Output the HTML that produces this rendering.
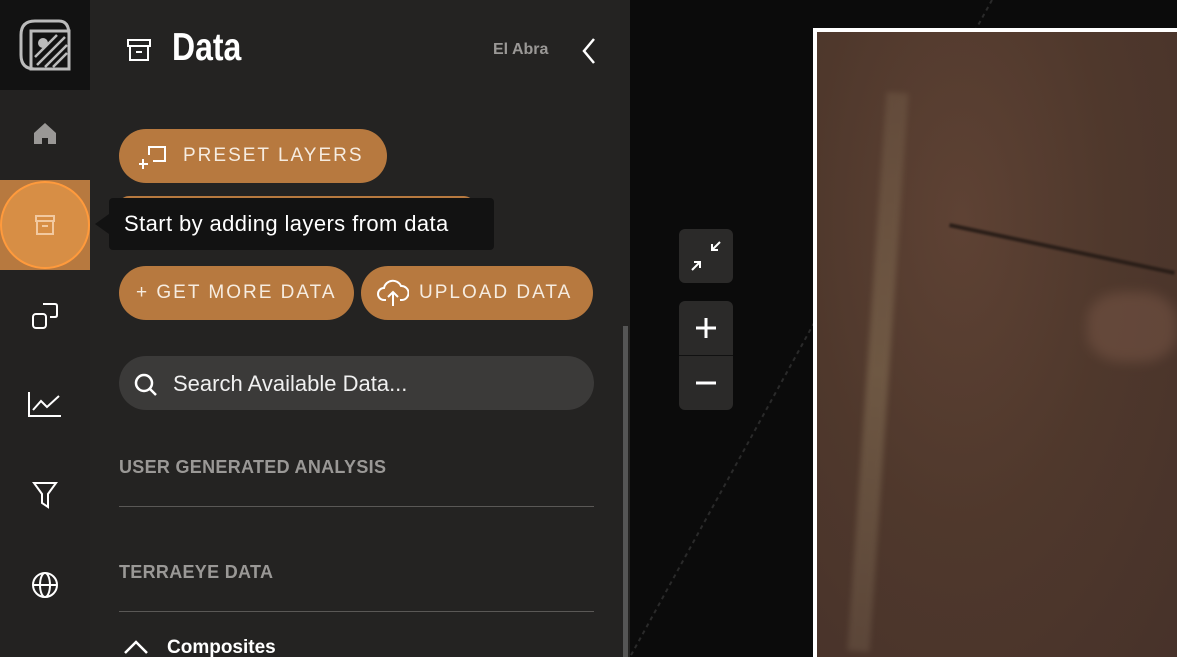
<!DOCTYPE html>
<html><head><style>
*{margin:0;padding:0;box-sizing:border-box}
html,body{width:1177px;height:657px;overflow:hidden}
body{background:#0b0b0b;font-family:"Liberation Sans",sans-serif;position:relative}
.side{position:absolute;left:0;top:0;width:90px;height:657px;background:#232221}
.logo{position:absolute;left:0;top:0;width:90px;height:90px;background:#121212}
.panel{position:absolute;left:90px;top:0;width:540px;height:657px;background:#242322}
.btn{position:absolute;height:54px;border-radius:27px;background:#b7793f;color:#f6ece0;font-size:19px;letter-spacing:2px;display:flex;align-items:center}
.ic{position:absolute;stroke:#fff;fill:none;stroke-width:2}
.hdr{position:absolute;left:119px;color:#9a9896;font-size:18px;font-weight:bold;letter-spacing:.3px}
.line{position:absolute;left:119px;width:475px;height:1px;background:#5a5856}
.ctl{position:absolute;left:679px;width:54px;background:#2b2a29;border-radius:6px}
</style></head><body>
<div class="side"></div>
<div class="logo">
<svg style="position:absolute;left:17px;top:17px" width="56" height="56" viewBox="0 0 56 56" fill="none" stroke="#bbb" stroke-width="3"><path d="M4 18 Q4 4 18 4 H42 Q52 4 52 18 V52 H18 Q4 52 4 38Z"/><rect x="14" y="14" width="38" height="38"/><circle cx="26" cy="26" r="3.5" fill="#bbb"/><path d="M20 48 L48 20 M28 50 L50 28 M36 50 L50 36 M18 40 L40 18" stroke-width="2.5"/></svg>
</div>
<svg style="position:absolute;left:33px;top:122px" width="24" height="22" viewBox="0 0 24 22"><path d="M12 1 L23 11 V22 H15 V16 H9 V22 H1 V11Z" fill="#9a9896"/></svg>
<div style="position:absolute;left:0;top:180px;width:90px;height:90px;background:#b7793f"></div>
<div style="position:absolute;left:0;top:181px;width:90px;height:88px;border-radius:50%;background:#d78e45;border:2px solid #ff9a3c"></div>
<svg class="ic" style="left:33px;top:213px;stroke:#f2c9a0" width="24" height="24" viewBox="0 0 24 24"><rect x="3" y="3" width="18" height="5"/><path d="M4 8 V21 H20 V8 M9 13 H15"/></svg>
<svg class="ic" style="left:31px;top:302px" width="28" height="28" viewBox="0 0 28 28"><rect x="2" y="12" width="13" height="14" rx="3"/><path d="M12 2 H24 Q26 2 26 4 V13 Q26 15 24 15 H19"/></svg>
<svg class="ic" style="left:27px;top:390px" width="36" height="28" viewBox="0 0 36 28"><path d="M2 2 V26 H34 M6 20 L14 11 L20 17 L32 6"/></svg>
<svg class="ic" style="left:32px;top:480px" width="26" height="30" viewBox="0 0 26 30"><path d="M2 3 H24 L16 14 V27 L10 23 V14Z"/></svg>
<svg class="ic" style="left:31px;top:571px" width="28" height="28" viewBox="0 0 28 28"><circle cx="14" cy="14" r="12"/><ellipse cx="14" cy="14" rx="5" ry="12"/><path d="M2 14 H26"/></svg>
<div class="panel"></div>
<svg class="ic" style="left:126px;top:37px" width="26" height="26" viewBox="0 0 26 26"><rect x="2" y="3" width="22" height="6"/><path d="M4 9 V23 H22 V9 M10 15 H16"/></svg>
<div style="position:absolute;left:172px;top:26px;color:#fff;font-size:39px;font-weight:bold;transform:scaleX(.82);transform-origin:left">Data</div>
<div style="position:absolute;left:493px;top:41px;color:#9a9896;font-size:16px;font-weight:bold">El Abra</div>
<svg class="ic" style="left:580px;top:37px" width="18" height="28" viewBox="0 0 18 28"><path d="M14 2 L4 14 L14 26" stroke-width="2.5"/></svg>
<div class="btn" style="left:119px;top:129px;width:268px;padding-left:64px">PRESET LAYERS</div>
<svg class="ic" style="left:139px;top:143px" width="30" height="26" viewBox="0 0 30 26"><path d="M4 16 V26 M-1 21 H9 M10 12 V4 H26 V18 H14"/></svg>
<div style="position:absolute;left:119px;top:196px;width:355px;height:20px;border-radius:10px;background:#b7793f"></div>
<div style="position:absolute;left:109px;top:198px;width:385px;height:52px;background:#121212;border-radius:4px;color:#fff;font-size:22px;letter-spacing:.4px;padding:13px 0 0 15px">Start by adding layers from data</div>
<div style="position:absolute;left:95px;top:214px;width:0;height:0;border-top:10px solid transparent;border-bottom:10px solid transparent;border-right:14px solid #121212"></div>
<div class="btn" style="left:119px;top:266px;width:235px;padding-left:17px">+ GET MORE DATA</div>
<div class="btn" style="left:361px;top:266px;width:232px;padding-left:58px">UPLOAD DATA</div>
<svg class="ic" style="left:377px;top:278px" width="32" height="30" viewBox="0 0 32 30"><path d="M9 22 H7 A6 6 0 0 1 7 10 A9 9 0 0 1 24 8 A6 6 0 0 1 25 22 H23 M16 28 V14 M11 19 L16 14 L21 19"/></svg>
<div style="position:absolute;left:119px;top:356px;width:475px;height:54px;border-radius:27px;background:#3b3a39"></div>
<svg class="ic" style="left:133px;top:372px" width="26" height="26" viewBox="0 0 26 26"><circle cx="11" cy="11" r="8" stroke-width="2.5"/><path d="M17 17 L23 23" stroke-width="2.5"/></svg>
<div style="position:absolute;left:173px;top:371px;color:#f0f0f0;font-size:22px">Search Available Data...</div>
<div class="hdr" style="top:457px">USER GENERATED ANALYSIS</div>
<div class="line" style="top:506px"></div>
<div class="hdr" style="top:562px">TERRAEYE DATA</div>
<div class="line" style="top:611px"></div>
<svg class="ic" style="left:123px;top:639px" width="26" height="16" viewBox="0 0 26 16"><path d="M2 14 L13 3 L24 14" stroke-width="2.5"/></svg>
<div style="position:absolute;left:167px;top:638px;height:19px;overflow:hidden;line-height:19px;color:#fff;font-size:19px;font-weight:bold">Composites</div>
<div style="position:absolute;left:623px;top:326px;width:5px;height:331px;background:#555"></div>
<svg style="position:absolute;left:600px;top:0" width="420" height="657"><path d="M392 0 L30 657" stroke="#2a2a2a" stroke-width="2" stroke-dasharray="4 4"/></svg>
<div class="ctl" style="top:229px;height:54px"></div>
<svg class="ic" style="left:689px;top:239px" width="34" height="34" viewBox="0 0 34 34"><path d="M31 3 L23 11 M23 5 V11 H29 M3 31 L11 23 M5 23 H11 V29"/></svg>
<div class="ctl" style="top:301px;height:109px"></div>
<div style="position:absolute;left:679px;top:355px;width:54px;height:1px;background:#111"></div>
<svg class="ic" style="left:693px;top:315px" width="26" height="26" viewBox="0 0 26 26"><path d="M13 3 V23 M3 13 H23" stroke-width="3"/></svg>
<svg class="ic" style="left:693px;top:370px" width="26" height="26" viewBox="0 0 26 26"><path d="M3 13 H23" stroke-width="3"/></svg>
<div style="position:absolute;left:813px;top:28px;width:364px;height:629px;border:4px solid #fff;border-right:none;border-bottom:none;background:radial-gradient(ellipse at 40% 30%,#5e4234,#4f382c 50%,#47322a);overflow:hidden">
<div style="position:absolute;left:50px;top:60px;width:22px;height:560px;background:linear-gradient(#6f5845,#857055,#6a5545);transform:rotate(4deg);opacity:.55;filter:blur(3px)"></div>
<div style="position:absolute;left:130px;top:215px;width:230px;height:4px;background:#2a1e18;transform:rotate(12deg);filter:blur(1px)"></div>
<div style="position:absolute;left:270px;top:260px;width:90px;height:70px;background:#7a5848;opacity:.5;border-radius:40%;filter:blur(6px)"></div>
</div>
</body></html>
